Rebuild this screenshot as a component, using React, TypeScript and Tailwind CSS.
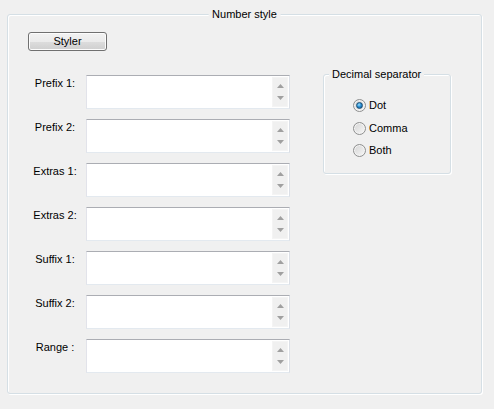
import React from 'react';

const fields = ['Prefix 1:', 'Prefix 2:', 'Extras 1:', 'Extras 2:', 'Suffix 1:', 'Suffix 2:', 'Range :'];

const SpinBox: React.FC = () => (
  <div className="flex h-[34px] w-[204px] border border-[#abadb3] border-b-[#e3e9ef] border-r-[#dbdfe6] border-l-[#e2e3ea] bg-white">
    <div className="flex-1" />
    <div className="my-[1px] mr-[1px] flex w-[16px] flex-col items-center justify-between border border-[#f4f4f4] bg-[#f0f0f0] py-[6px]">
      <svg width="7" height="4" viewBox="0 0 7 4">
        <path d="M3.5 0 L7 4 L0 4 Z" fill="#a0a0a0" />
      </svg>
      <svg width="7" height="4" viewBox="0 0 7 4">
        <path d="M0 0 L7 0 L3.5 4 Z" fill="#a0a0a0" />
      </svg>
    </div>
  </div>
);

const Radio: React.FC<{ label: string; checked?: boolean }> = ({ label, checked }) => (
  <div className="flex h-[13px] items-center gap-[3px]">
    <div className="flex h-[13px] w-[13px] items-center justify-center rounded-full border border-[#8e8f8f] bg-[linear-gradient(135deg,#d4d4d4,#f8f8f8)] shadow-[inset_0_0_0_1px_#f4f4f4]">
      {checked && (
        <div className="h-[7px] w-[7px] rounded-full border border-[#1c4e73] bg-[radial-gradient(circle_at_40%_35%,#9de2ff_0%,#2a8fd4_45%,#0d4f86_100%)]" />
      )}
    </div>
    <span>{label}</span>
  </div>
);

export default function App() {
  return (
    <div
      className="h-[409px] w-[494px] bg-[#f0f0f0] pl-[7px] pt-[14px] text-[11px] leading-[13px] text-black"
      style={{ fontFamily: '"Liberation Sans", Arial, sans-serif' }}
    >
      <div className="relative h-[380px] w-[475px] rounded-[3px] border border-[#d5dfe5] shadow-[inset_1px_1px_0_#fff,1px_1px_0_#fff]">
        <span className="absolute left-1/2 top-[-7px] -translate-x-1/2 bg-[#f0f0f0] px-[4px]">Number style</span>

        <div className="flex pl-[20px] pt-[17px]">
          <div className="flex flex-col">
            <button className="h-[19px] w-[79px] rounded-[3px] border border-[#707070] bg-[linear-gradient(#f2f2f2_0%,#ebebeb_50%,#dddddd_50%,#cfcfcf_100%)] shadow-[inset_0_0_0_1px_#fcfcfc] leading-[15px]">
              Styler
            </button>

            <div className="mt-[24px] flex flex-col gap-[10px]">
              {fields.map((f) => (
                <div key={f} className="flex items-start">
                  <div className="w-[54px] pt-[2px] text-center">{f}</div>
                  <div className="ml-[4px]">
                    <SpinBox />
                  </div>
                </div>
              ))}
            </div>
          </div>

          <div className="relative ml-[33px] mt-[42px] h-[100px] w-[128px] rounded-[3px] border border-[#d5dfe5] shadow-[inset_1px_1px_0_#fff,1px_1px_0_#fff]">
            <span className="absolute left-[5px] top-[-7px] bg-[#f0f0f0] px-[3px]">Decimal separator</span>
            <div className="flex flex-col gap-[9.5px] pl-[29px] pt-[24px]">
              <Radio label="Dot" checked />
              <Radio label="Comma" />
              <Radio label="Both" />
            </div>
          </div>
        </div>
      </div>
    </div>
  );
}
